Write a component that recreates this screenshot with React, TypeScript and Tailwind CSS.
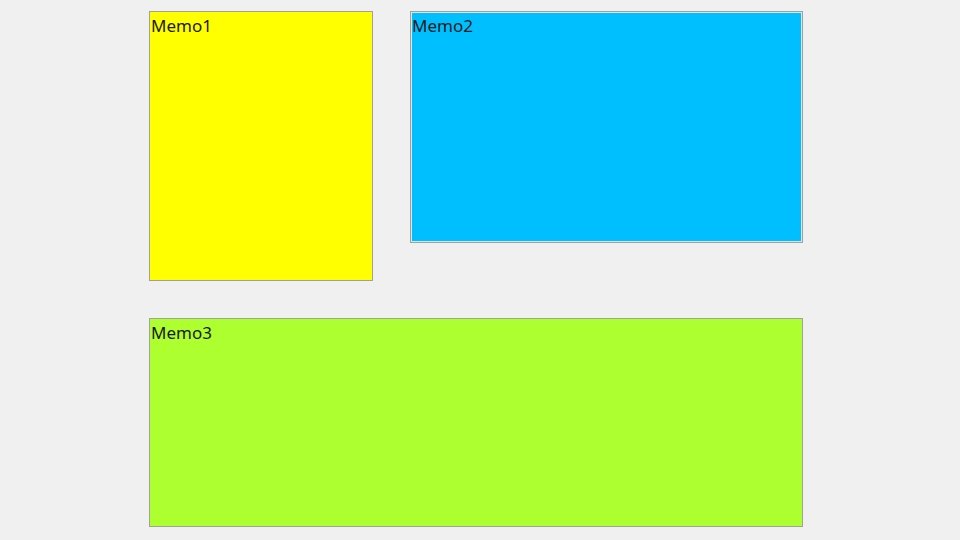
export default function App() {
  return (
    <div className="w-[960px] h-[540px] bg-[#f0f0f0] pl-[149px] pt-[11px] flex flex-col gap-[37px] font-['Noto_Sans',sans-serif] text-[17px] text-[#1a1a1a]">
      <div className="flex items-start gap-[37px]">
        <div className="w-[224px] h-[270px] bg-[#ffff00] border border-[#a0a0a0] px-[1px] leading-[27px]">Memo1</div>
        <div className="w-[393px] h-[232px] bg-[#00bfff] border border-[#a0a0a0] shadow-[inset_0_0_0_1px_#e3e3e3] px-[1px] leading-[27px]">Memo2</div>
      </div>
      <div className="w-[654px] h-[209px] bg-[#adff2f] border border-[#a0a0a0] px-[1px] leading-[27px]">Memo3</div>
    </div>
  );
}
